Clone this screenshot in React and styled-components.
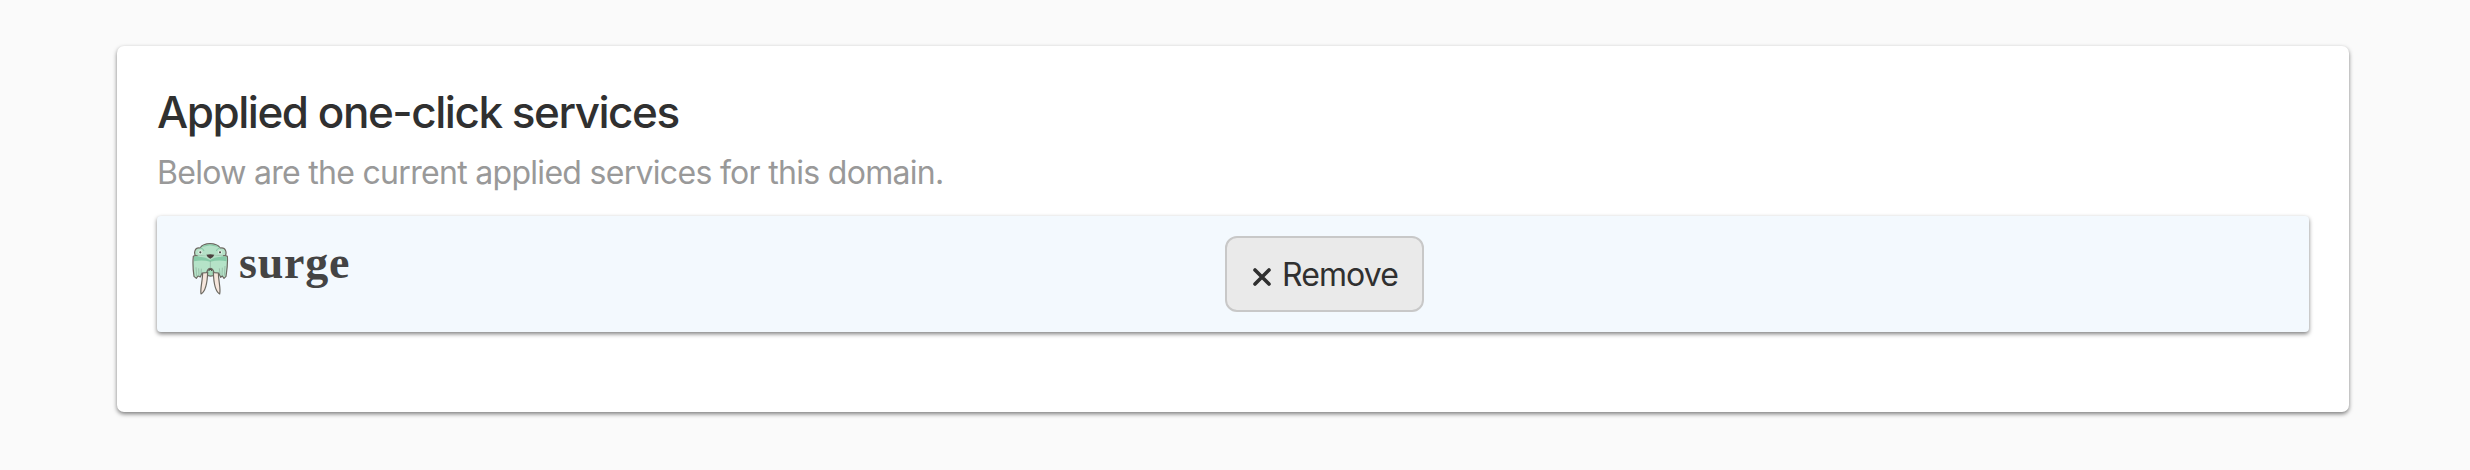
import React from "react";
import styled, { createGlobalStyle } from "styled-components";

const GlobalStyle = createGlobalStyle`
  *, *::before, *::after { box-sizing: border-box; }
  body {
    margin: 0;
    background: #fafafa;
    color: #303030;
    font-family: Inter, "Liberation Sans", sans-serif;
  }
`;

const Page = styled.main`
  height: 470px;
  padding: 46px 121px 0 117px;
`;

const Card = styled.section`
  height: 366px;
  padding: 39px 40px 40px;
  border-radius: 7px;
  background: #fff;
  box-shadow: 0 2px 4px rgba(0, 0, 0, 0.5);
`;

const Title = styled.h2`
  margin: 0;
  font-size: 44px;
  font-weight: 550;
  line-height: 54px;
  letter-spacing: -1.46px;
  white-space: nowrap;
`;

const Subtitle = styled.p`
  margin: 11px 0 21px;
  font-size: 32px;
  line-height: 45px;
  letter-spacing: -0.7px;
  color: #999;
  white-space: nowrap;
`;

const ServiceRow = styled.div`
  display: grid;
  grid-template-columns: 1033px 1fr;
  align-items: start;
  height: 116px;
  padding: 20px 35px;
  border-radius: 4px;
  background: #f3f9fe;
  box-shadow: 0 2px 4px rgba(0, 0, 0, 0.5);
`;

const Brand = styled.div`
  display: flex;
  align-items: flex-start;
  gap: 10px;
  padding-top: 6px;
`;

const BrandName = styled.span`
  margin-top: -5px;
  font-family: "Liberation Serif", serif;
  font-size: 46px;
  font-weight: 700;
  line-height: 52px;
  letter-spacing: 0.8px;
  color: #444;
`;

const RemoveButton = styled.button`
  display: flex;
  align-items: center;
  justify-self: start;
  gap: 10px;
  width: 199px;
  height: 76px;
  padding: 0 0 0 25px;
  border: 2px solid #c8c8c8;
  border-radius: 12px;
  background: #eaeaea;
  color: #303030;
  font-family: inherit;
  font-size: 32px;
  letter-spacing: -0.9px;
`;

const CrossIcon = styled.svg`
  flex: none;
  margin-top: 7px;
`;

function Walrus() {
  return (
    <svg width="37" height="54" viewBox="0 0 111 162" aria-hidden="true">
      <g stroke="#6b6860" strokeWidth="3.6" strokeLinejoin="round">
        <path d="M43 82h26v15q-13 11-26 0z" fill="#a5dabb" />
        <path d="M32 89c0 28-8 51-5 67 12-7 19-30 20-66zM79 89c0 28 8 51 4 67-12-7-18-30-19-66z" fill="#f6e6dc" />
        <path d="M24 18Q33 5 54 5t31 13c17-3 21 15 13 27l-10 9H22l-10-9C4 33 8 15 24 18z" fill="#b5e1c7" />
        <path d="M4 43Q9 39 20 42q15-3 34 5 19-8 34-5 12-3 18 1c2 23-1 40-4 60l-6 6-5-7-5 4-6-13-14-1q-3-13-11-13t-11 13l-14 1-5 12-7-3-5 7-7-6Q1 70 4 43z" fill="#b5e3c8" />
      </g>
      <path d="M17 40h76v8l-38 8-38-8z" fill="#b5e1c7" />
      <path d="M6 45q10-5 19 0 14-1 29 9 15-10 30-9 10-4 20 0v13q-23-6-49 1-25-7-49-1z" fill="#86caa7" />
      <path d="M26 18q9 2 10 9M83 18q-9 2-10 9M32 13q21-9 45 0" fill="none" stroke="#86caa7" strokeWidth="3" />
      <path d="M12 76l2 27M20 79l1 24M28 80l-1 18M55 57v20M82 79l2 18M91 77l-1 24M99 72l-2 29" fill="none" stroke="#7f9d8c" strokeWidth="1.5" />
      <path d="M43 38q12-3 24 0-3 9-12 12-9-3-12-12z" fill="#4b403e" />
      <circle cx="25" cy="31" r="6" fill="#e1f1e6" />
      <circle cx="84" cy="31" r="6" fill="#e1f1e6" />
      <circle cx="25" cy="31" r="3.2" fill="#4d514b" />
      <circle cx="84" cy="31" r="3.2" fill="#4d514b" />
      <path d="M50 87q5-10 10 0" fill="none" stroke="#4b403e" strokeWidth="3" />
    </svg>
  );
}

export default function App() {
  return (
    <>
      <GlobalStyle />
      <Page>
        <Card>
          <Title>Applied one-click services</Title>
          <Subtitle>Below are the current applied services for this domain.</Subtitle>
          <ServiceRow>
            <Brand>
              <Walrus />
              <BrandName>surge</BrandName>
            </Brand>
            <RemoveButton type="button">
              <CrossIcon width="20" height="20" viewBox="0 0 20 20" aria-hidden="true">
                <path d="M3 2l14 14M17 2L3 16" stroke="#303030" strokeWidth="3.6" strokeLinecap="round" />
              </CrossIcon>
              Remove
            </RemoveButton>
          </ServiceRow>
        </Card>
      </Page>
    </>
  );
}
